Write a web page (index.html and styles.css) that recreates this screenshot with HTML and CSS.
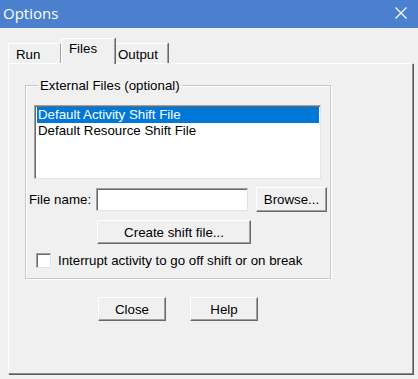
FILE: index.html
```html
<!DOCTYPE html>
<html lang="en">
<head>
  <meta charset="UTF-8">
  <title>Options</title>
  <link rel="stylesheet" href="styles.css">
</head>
<body>
  <div class="window">
    <div class="titlebar">
      <span class="titlebar-text">Options</span>
      <svg class="titlebar-close" width="12" height="12" viewBox="0 0 12 12">
        <path d="M0.5 0.5 L11.5 11.5 M11.5 0.5 L0.5 11.5" stroke="#fff" stroke-width="1.2" fill="none"/>
      </svg>
    </div>

    <div class="tabs">
      <div class="tab">Run</div>
      <div class="tab tab-active">Files</div>
      <div class="tab">Output</div>
    </div>

    <div class="panel">
      <fieldset class="group">
        <legend>External Files (optional)</legend>
        <div class="listbox">
          <div class="listbox-item listbox-item-selected">Default Activity Shift File</div>
          <div class="listbox-item">Default Resource Shift File</div>
        </div>

        <div class="file-row">
          <label class="file-label">File name:</label>
          <div class="textbox"></div>
          <button class="btn btn-browse">Browse...</button>
        </div>

        <button class="btn btn-create">Create shift file...</button>

        <div class="check-row">
          <span class="checkbox"></span>
          <span>Interrupt activity to go off shift or on break</span>
        </div>
      </fieldset>

      <div class="actions">
        <button class="btn btn-action">Close</button>
        <button class="btn btn-action">Help</button>
      </div>
    </div>
  </div>
</body>
</html>
```

FILE: styles.css
```css
* { margin: 0; padding: 0; box-sizing: border-box; }

html,
body { width: 100%; height: 100%; }

body {
  background: #f0f0f0;
  font-family: "Liberation Sans", Arial, sans-serif;
  font-size: 13.3px;
  line-height: 15px;
  color: #000;
}

.window {
  width: 418px;
  height: 379px;
  overflow: hidden;
}

.titlebar {
  height: 28px;
  background: #4a80cd;
  display: flex;
  align-items: center;
  justify-content: space-between;
  padding: 0 11px 2px 3px;
  color: #fff;
}
.titlebar-text {
  font-family: "Open Sans", "Noto Sans", sans-serif;
  font-size: 15px;
  line-height: 20px;
}

.tabs {
  display: flex;
  align-items: flex-end;
  height: 35px;
  padding-left: 8px;
}
.tab {
  height: 20px;
  padding: 3px 0 0 7px;
  width: 52px;
  border-top: 1px solid #fff;
  border-left: 1px solid #fff;
  border-right: 1px solid #a0a0a0;
  box-shadow: 1px 0 0 #696969;
}
.tab:first-child { width: 53px; }
.tab-active {
  height: 26px;
  width: 54px;
  padding-top: 2px;
  margin-bottom: -1px;
  background: #f0f0f0;
  position: relative;
  z-index: 1;
}
.tab:last-child { width: 53px; padding-left: 2px; }

.panel {
  height: 311px;
  margin: 0 5px 0 8px;
  border-top: 1px solid #fff;
  border-left: 1px solid #fff;
  border-right: 1px solid #8c8c8c;
  border-bottom: 1px solid #8c8c8c;
  box-shadow: 1px 1px 0 #5a5a5a;
  padding: 14px 0 0 16px;
}

.group {
  width: 306px;
  height: 201px;
  border: 1px solid #c8c8c8;
  box-shadow: 1px 1px 0 #fff, inset 1px 1px 0 #fff;
  padding: 12px 0 0 3px;
}
.group legend {
  margin-left: 9px;
  padding: 0 2px;
}

.listbox {
  width: 287px;
  height: 74px;
  margin-left: 5px;
  background: #fff;
  border-top: 1px solid #a0a0a0;
  border-left: 1px solid #a0a0a0;
  border-right: 1px solid #e3e3e3;
  border-bottom: 1px solid #e3e3e3;
  box-shadow: inset 1px 1px 0 #696969;
  padding: 1px 1px 0 2px;
}
.listbox-item {
  height: 16px;
  line-height: 16px;
  padding-left: 1px;
}
.listbox-item-selected {
  background: #0078d7;
  color: #fff;
}

.file-row {
  display: flex;
  align-items: center;
  margin-top: 8px;
}
.file-label {
  width: 67px;
}
.textbox {
  width: 152px;
  height: 23px;
  background: #fff;
  border-top: 1px solid #a0a0a0;
  border-left: 1px solid #a0a0a0;
  border-right: 1px solid #e3e3e3;
  border-bottom: 1px solid #e3e3e3;
  box-shadow: inset 1px 1px 0 #696969;
}

.btn {
  font-family: "Liberation Sans", Arial, sans-serif;
  font-size: 13.3px;
  color: #000;
  background: #f0f0f0;
  border-top: 1px solid #fff;
  border-left: 1px solid #fff;
  border-right: 1px solid #696969;
  border-bottom: 1px solid #696969;
  box-shadow: inset -1px -1px 0 #a0a0a0;
}
.btn-browse {
  width: 71px;
  height: 25px;
  margin-left: 8px;
}
.btn-create {
  display: block;
  width: 154px;
  height: 24px;
  margin: 8px 0 0 68px;
}

.check-row {
  display: flex;
  align-items: center;
  gap: 7px;
  margin: 9px 0 0 7px;
}
.checkbox {
  width: 15px;
  height: 15px;
  background: #fff;
  border-top: 1px solid #a0a0a0;
  border-left: 1px solid #a0a0a0;
  border-right: 1px solid #e3e3e3;
  border-bottom: 1px solid #e3e3e3;
  box-shadow: inset 1px 1px 0 #696969;
}

.actions {
  display: flex;
  gap: 24px;
  margin: 18px 0 0 73px;
}
.btn-action {
  width: 68px;
  height: 24px;
}
```
